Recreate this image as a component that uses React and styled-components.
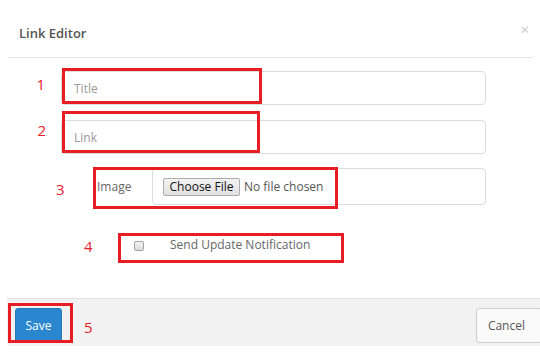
import React from 'react';
import styled, { createGlobalStyle } from 'styled-components';

const GlobalStyle = createGlobalStyle`
  html, body {
    margin: 0;
    padding: 0;
    background: #fff;
    overflow: hidden;
  }
  body {
    font-family: "Open Sans", "Noto Sans", sans-serif;
  }
`;

const Modal = styled.div`
  width: 543px;
  margin-left: 7px;
  display: flex;
  flex-direction: column;
`;

const Header = styled.div`
  height: 33px;
  padding: 24px 4px 0 12px;
  margin-right: 17px;
  border-bottom: 1px solid #e5e5e5;
  display: flex;
  justify-content: space-between;
  align-items: flex-start;
`;

const Title = styled.h4`
  margin: 0;
  font-size: 13px;
  font-weight: 600;
  line-height: 18px;
  color: #555;
`;

const Close = styled.span`
  margin-top: -4px;
  font-size: 15px;
  line-height: 18px;
  color: #c9c9c9;
  cursor: pointer;
`;

const Body = styled.div`
  height: 240px;
  box-sizing: border-box;
  padding: 13px 0 0 54px;
  display: flex;
  flex-direction: column;
`;

const Annotated = styled.div`
  position: relative;
  display: ${p => (p.$inline ? 'inline-flex' : 'block')};
  margin-bottom: ${p => p.$gap || 0}px;
`;

const Mark = styled.span`
  position: absolute;
  left: ${p => p.$x}px;
  top: ${p => p.$y}px;
  width: ${p => p.$w}px;
  height: ${p => p.$h}px;
  border: 3px solid #e81c24;
  box-sizing: border-box;
  pointer-events: none;
`;

const Num = styled.span`
  position: absolute;
  left: ${p => p.$x}px;
  top: ${p => p.$y}px;
  font-size: 15px;
  line-height: 15px;
  color: #e8202a;
`;

const Field = styled.input`
  display: block;
  width: 425px;
  height: 34px;
  box-sizing: border-box;
  border: 1px solid #dcdcdc;
  border-radius: 4px;
  padding: 0 12px;
  font-family: inherit;
  font-size: 12px;
  color: #555;
  outline: none;
  &::placeholder {
    color: #999;
  }
`;

const FileRow = styled.div`
  width: 393px;
  height: 37px;
  margin-left: 32px;
  display: flex;
`;

const FileLabel = styled.label`
  width: 59px;
  box-sizing: border-box;
  padding-left: 4px;
  display: flex;
  align-items: center;
  font-size: 12px;
  color: #666;
`;

const FileBox = styled.div`
  flex: 1;
  box-sizing: border-box;
  border: 1px solid #dcdcdc;
  border-radius: 4px;
  padding-left: 10px;
  display: flex;
  align-items: center;
`;

const ChooseButton = styled.button`
  width: 77px;
  height: 18px;
  box-sizing: border-box;
  padding: 0;
  border: 1px solid #adadad;
  border-radius: 2px;
  background: linear-gradient(#f3f3f3, #e1e1e1);
  font-family: inherit;
  font-size: 12px;
  line-height: 16px;
  color: #111;
`;

const NoFile = styled.span`
  margin-left: 4px;
  font-size: 12px;
  color: #555;
`;

const CheckRow = styled.label`
  position: relative;
  width: 226px;
  height: 30px;
  box-sizing: border-box;
  margin: 28px 0 0 57px;
  padding: 4px 0 0 16px;
  display: flex;
  align-items: flex-start;
`;

const Check = styled.input.attrs({ type: 'checkbox' })`
  appearance: none;
  margin: 4px 0 0 0;
  width: 10px;
  height: 10px;
  box-sizing: border-box;
  border: 1px solid #a2a2a2;
  border-radius: 2px;
  background: linear-gradient(#f4f4f4, #dadada);
`;

const CheckText = styled.span`
  margin-left: 26px;
  font-size: 12px;
  line-height: 16px;
  color: #666;
`;

const Footer = styled.div`
  height: 38px;
  padding: 9px 8px 0 7.5px;
  border-top: 1px solid #e3e3e3;
  background: #f2f2f2;
  display: flex;
  justify-content: space-between;
  align-items: flex-start;
`;

const Button = styled.button`
  height: ${p => (p.$primary ? 34 : 35)}px;
  padding: ${p => (p.$primary ? '0 10px' : '0 16px 0 11px')};
  border: 1px solid ${p => (p.$primary ? '#2478bb' : '#cccccc')};
  border-radius: 3px;
  background: ${p => (p.$primary ? '#2a87cf' : '#fafafa')};
  color: ${p => (p.$primary ? '#fff' : '#555')};
  font-family: inherit;
  font-size: 12px;
  cursor: pointer;
`;

export default function App() {
  return (
    <>
      <GlobalStyle />
      <Modal>
        <Header>
          <Title>Link Editor</Title>
          <Close>×</Close>
        </Header>
        <Body>
          <Annotated $gap={15}>
            <Field placeholder="Title" />
            <Mark $x={1} $y={-3} $w={200} $h={36} />
            <Num $x={-24.5} $y={6.4}>1</Num>
          </Annotated>
          <Annotated $gap={14}>
            <Field placeholder="Link" />
            <Mark $x={1} $y={-9} $w={198} $h={42} />
            <Num $x={-23.4} $y={3.4}>2</Num>
          </Annotated>
          <Annotated>
            <FileRow>
              <FileLabel>Image</FileLabel>
              <FileBox>
                <ChooseButton type="button">Choose File</ChooseButton>
                <NoFile>No file chosen</NoFile>
              </FileBox>
            </FileRow>
            <Mark $x={32} $y={-1} $w={245} $h={42} />
            <Num $x={-5} $y={14.4}>3</Num>
          </Annotated>
          <CheckRow>
            <Check />
            <CheckText>Send Update Notification</CheckText>
            <Mark $x={0} $y={0} $w={226} $h={30} />
            <Num $x={-34} $y={6.1}>4</Num>
          </CheckRow>
        </Body>
        <Footer>
          <Annotated $inline>
            <Button $primary>Save</Button>
            <Mark $x={-7} $y={-5} $w={65} $h={40} />
            <Num $x={69.5} $y={12.4}>5</Num>
          </Annotated>
          <Button>Cancel</Button>
        </Footer>
      </Modal>
    </>
  );
}
